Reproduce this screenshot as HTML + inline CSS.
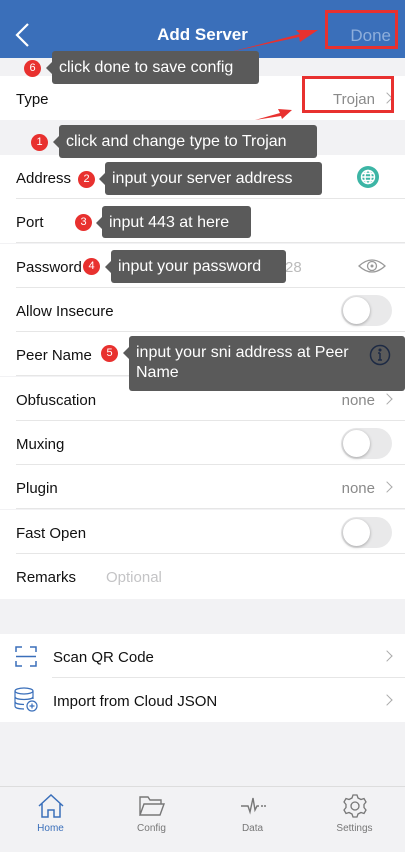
<!DOCTYPE html>
<html><head><meta charset="utf-8"><style>
*{margin:0;padding:0;box-sizing:border-box}
body{width:405px;height:852px;background:#f2f2f4;font-family:"Liberation Sans",sans-serif;position:relative;overflow:hidden}
.hdr{position:absolute;left:0;top:0;width:405px;height:58px;background:#3a6fba}
.row{position:absolute;left:0;width:405px;height:44px;background:#fff;font-size:15px;color:#111}
.row .l{position:absolute;left:16px;top:15px}
.row .r{position:absolute;right:30px;top:15px;color:#8a8a8a}
.sep{position:absolute;left:16px;right:0;bottom:0;height:1px;background:#e6e6e6}
.chev{position:absolute;right:14px;top:18px;width:8px;height:8px;border-top:1.5px solid #aaa;border-right:1.5px solid #aaa;transform:rotate(45deg)}
.tog{position:absolute;right:13px;top:7px;width:51px;height:31px;border-radius:16px;background:#e9e9ea}
.tog:after{content:"";position:absolute;left:2px;top:2px;width:27px;height:27px;border-radius:50%;background:#fff;box-shadow:0 1px 3px rgba(0,0,0,.3)}
.tip{position:absolute;background:#5a5a5a;color:#fff;font-size:16px;border-radius:3px;padding:7px 7px;line-height:20px;white-space:nowrap}
.tip:before{content:"";position:absolute;left:-6px;top:11px;border:6px solid transparent;border-right-color:#5a5a5a;border-left:0}
.b{position:absolute;width:17px;height:17px;border-radius:50%;background:#e8312f;color:#fff;font-size:11px;text-align:center;line-height:17px}
.red{position:absolute;border:3px solid #e8312f}
.tab{position:absolute;top:786px;height:66px;width:101px;text-align:center;font-size:10px;color:#777}
</style></head><body>
<div class="hdr">
<svg style="position:absolute;left:14px;top:22px" width="16" height="26"><path d="M14 2 L3 13 L14 24" stroke="#fff" stroke-width="2.2" fill="none"/></svg>
<div style="position:absolute;left:0;width:405px;top:25px;text-align:center;color:#fff;font-weight:bold;font-size:17px">Add Server</div>
<div style="position:absolute;right:14px;top:26px;color:#8eaedb;font-size:17px">Done</div>
</div>
<div class="row" style="top:76px"><span class="l">Type</span><span class="r">Trojan</span><div class="chev"></div></div>
<div class="row" style="top:155px"><span class="l">Address</span><div class="sep"></div>
<svg style="position:absolute;right:26px;top:11px" width="22" height="22" viewBox="0 0 22 22"><circle cx="11" cy="11" r="11" fill="#3cb5a5"/><g stroke="#fff" stroke-width="1.4" fill="none"><circle cx="11" cy="11" r="6.5"/><ellipse cx="11" cy="11" rx="3" ry="6.5"/><path d="M4.5 11h13M5.5 7.5h11M5.5 14.5h11"/></g></svg></div>
<div class="row" style="top:199px"><span class="l">Port</span><div class="sep"></div></div>
<div class="row" style="top:244px"><span class="l">Password</span><span style="position:absolute;left:285px;top:15px;color:#bbb">28</span><div class="sep"></div>
<svg style="position:absolute;right:18px;top:12px" width="30" height="20"><path d="M2 10 Q15 -2 28 10 Q15 22 2 10Z" stroke="#999" stroke-width="1.3" fill="none"/><circle cx="15" cy="10" r="4.5" stroke="#999" stroke-width="1.3" fill="none"/><circle cx="15" cy="10" r="1.5" fill="#999"/></svg></div>
<div class="row" style="top:288px"><span class="l">Allow Insecure</span><div class="tog"></div><div class="sep"></div></div>
<div class="row" style="top:332px"><span class="l">Peer Name</span><div class="sep"></div></div>
<div class="row" style="top:377px"><span class="l">Obfuscation</span><span class="r">none</span><div class="chev"></div><div class="sep"></div></div>
<div class="row" style="top:421px"><span class="l">Muxing</span><div class="tog"></div><div class="sep"></div></div>
<div class="row" style="top:465px"><span class="l">Plugin</span><span class="r">none</span><div class="chev"></div><div class="sep"></div></div>
<div class="row" style="top:510px"><span class="l">Fast Open</span><div class="tog"></div><div class="sep"></div></div>
<div class="row" style="top:554px;height:45px"><span class="l">Remarks</span><span style="position:absolute;left:106px;top:15px;color:#c4c4c6">Optional</span></div>
<div class="row" style="top:634px"><span class="l" style="left:53px">Scan QR Code</span><div class="chev"></div><div class="sep" style="left:52px"></div>
<svg style="position:absolute;left:15px;top:12px" width="22" height="21" fill="none" stroke="#3a6fba" stroke-width="1.5"><path d="M1 6V1h6M15 1h6v5M1 15v5h6M15 20h6v-5M1 10.5h20"/></svg></div>
<div class="row" style="top:678px"><span class="l" style="left:53px">Import from Cloud JSON</span><div class="chev"></div>
<svg style="position:absolute;left:14px;top:9px" width="24" height="26" fill="none" stroke="#3a6fba" stroke-width="1.2"><ellipse cx="10" cy="4" rx="9" ry="3"/><path d="M1 4v15c0 2 4 3 9 3M19 4v8M1 9.5c0 2 4 3 9 3s9-1 9-3M1 14.5c0 2 4 3 9 3"/><circle cx="18" cy="19" r="5"/><path d="M18 16.5v5M15.5 19h5"/></svg></div>
<div style="position:absolute;top:786px;left:0;width:405px;height:1px;background:#ddd"></div>
<div class="tab" style="left:0;color:#3a6fba"><svg style="margin-top:8px" width="26" height="24" fill="none" stroke="#3a6fba" stroke-width="1.5"><path d="M1 12L13 1l12 11M4 9v14h6v-7h6v7h6V9"/></svg><div style="margin-top:2px">Home</div></div>
<div class="tab" style="left:101px"><svg style="margin-top:9px" width="26" height="22" fill="none" stroke="#777" stroke-width="1.4"><path d="M1 20V2h8l2 3h11v4M1 20l4-11h20l-4 11z"/></svg><div style="margin-top:3px">Config</div></div>
<div class="tab" style="left:202px"><svg style="margin-top:10px" width="26" height="20" fill="none" stroke="#777" stroke-width="1.4"><path d="M1 10h7l2 6 3-14 2 12 2-4h2M21 10h2M24 10h2"/></svg><div style="margin-top:4px">Data</div></div>
<div class="tab" style="left:304px"><svg style="margin-top:8px" width="26" height="24" viewBox="0 0 26 24" fill="none" stroke="#777" stroke-width="1.3"><circle cx="13" cy="12" r="4"/><path d="M11 1h4l1 3 3 1.5 3-1 2 3.5-2 2.5v3l2 2.5-2 3.5-3-1-3 1.5-1 3h-4l-1-3-3-1.5-3 1-2-3.5 2-2.5v-3l-2-2.5 2-3.5 3 1L10 4z"/></svg><div style="margin-top:2px">Settings</div></div>

<div class="red" style="left:325px;top:10px;width:73px;height:39px"></div>
<div class="red" style="left:302px;top:76px;width:92px;height:37px"></div>
<svg style="position:absolute;left:0;top:0" width="405" height="160"><path d="M230 52 L300 34 L296 30 L318 30 L300 42 L299 37 Z" fill="#e8312f"/><path d="M255 120 L280 113 L278 109 L292 110 L282 119 L281 116Z" fill="#e8312f"/></svg>
<div class="tip" style="left:52px;top:51px;width:207px;height:33px">click done to save config</div><div class="b" style="left:24px;top:60px">6</div>
<div class="tip" style="left:59px;top:125px;width:258px;height:33px">click and change type to Trojan</div><div class="b" style="left:31px;top:134px">1</div>
<div class="tip" style="left:105px;top:162px;width:217px;height:33px">input your server address</div><div class="b" style="left:78px;top:171px">2</div>
<div class="tip" style="left:102px;top:206px;width:149px;height:32px">input 443 at here</div><div class="b" style="left:75px;top:214px">3</div>
<div class="tip" style="left:111px;top:250px;width:175px;height:33px">input your password</div><div class="b" style="left:83px;top:258px">4</div>
<div class="tip" style="left:129px;top:336px;width:276px;height:55px;padding-top:7px">input your sni address at Peer<br>Name</div><div class="b" style="left:101px;top:345px">5</div>
<svg style="position:absolute;left:369px;top:344px" width="22" height="22" fill="none" stroke="#1d2a44" stroke-width="1.5"><circle cx="11" cy="11" r="9.5"/><path d="M11 9v7M9 16h4M9 9h2"/><circle cx="11" cy="6" r="0.8" fill="#1d2a44"/></svg>
</body></html>
